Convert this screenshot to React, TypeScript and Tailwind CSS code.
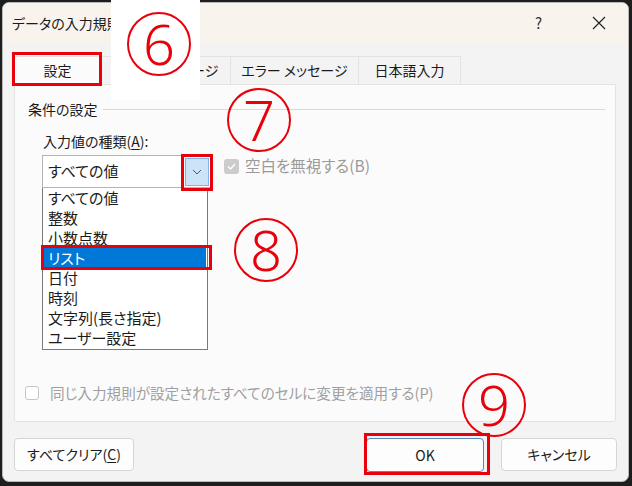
import React from 'react';

const jp = "font-['Segoe_UI','Noto_Sans_CJK_JP',sans-serif]";

// 丸数字の注記
const Badge: React.FC<{ n: string; x: number; y: number }> = ({ n, x, y }) => (
    <div
        className="absolute w-[64px] h-[64px] rounded-full border-[2.5px] border-[#e8000b] flex items-center justify-center text-[#e8000b] font-['Noto_Sans','DejaVu_Sans',sans-serif] font-light text-[56px] leading-none"
        style={{ left: x - 32, top: y - 32 }}
    >
        <span className="-mt-[3px]">{n}</span>
    </div>
);

// 赤枠
const RedBox: React.FC<{ x: number; y: number; w: number; h: number }> = ({ x, y, w, h }) => (
    <div className="absolute border-[3px] border-[#e8000b]" style={{ left: x, top: y, width: w, height: h }} />
);

const items = ['すべての値', '整数', '小数点数', 'リスト', '日付', '時刻', '文字列(長さ指定)', 'ユーザー設定'];

const App: React.FC = () => {
    return (
        <div className={`relative w-[632px] h-[486px] bg-[#1e1e1e] pt-[2px] pl-[2px] pr-[3px] pb-[4px] ${jp} [font-feature-settings:'palt'] text-[#1b1b1b]`}>
            <div className="h-full rounded-[7px] bg-[#f3f3f3] border border-[#b9b9b9] overflow-hidden flex flex-col">

                {/* TITLE BAR */}
                <div className="h-[40px] shrink-0 bg-[#f9f3ee] flex items-center pl-[9px] pr-[22px]">
                    <span className="text-[14px]">データの入力規則</span>
                    <span className="ml-auto text-[15px] text-[#333]">?</span>
                    <svg className="ml-[50px]" width="14" height="14" viewBox="0 0 14 14">
                        <path d="M1 1 L13 13 M13 1 L1 13" stroke="#222" strokeWidth="1.2" />
                    </svg>
                </div>

                {/* TABS */}
                <div className="mt-[13px] ml-[11px] flex h-[28px] text-[14px]">
                    <div className="w-[87px] bg-[#fbfbfb] border border-b-0 border-[#e3e3e3] rounded-t-[3px] flex items-center justify-center">設定</div>
                    <div className="w-[130px] border-t border-r border-[#e3e3e3] flex items-center justify-center">入力時メッセージ</div>
                    <div className="w-[128px] border-t border-r border-[#e3e3e3] flex items-center justify-center">エラー メッセージ</div>
                    <div className="w-[102px] border-t border-r border-[#e3e3e3] flex items-center justify-center">日本語入力</div>
                </div>

                {/* SETTINGS PANEL */}
                <div className="mx-[11px] mr-[12px] h-[338px] bg-[#fbfbfb] border border-[#e3e3e3] rounded-b-[3px] flex flex-col pl-[13px] pr-[10px] text-[14px]">
                    <div className="mt-[14px] h-[20px] flex items-center">
                        <span>条件の設定</span>
                        <div className="flex-1 ml-[5px] border-t border-[#d9d9d9]" />
                    </div>

                    <div className="mt-[12px] ml-[15px] h-[20px] flex items-center">
                        入力値の種類(<span className="underline underline-offset-2">A</span>):
                    </div>

                    <div className="mt-[4px] ml-[14px] flex">
                        <div className="w-[170px]">
                            <div className="h-[33px] bg-white border border-[#b4b4b4] flex items-center pl-[5px] pr-[2px] text-[15px]">
                                <span>すべての値</span>
                                <div className="ml-auto w-[24px] h-[28px] bg-[#cce4f7] border border-[#7eb4ea] flex items-center justify-center">
                                    <svg width="10" height="6" viewBox="0 0 10 6">
                                        <path d="M1 1 L5 5 L9 1" fill="none" stroke="#4a5a6a" strokeWidth="1" />
                                    </svg>
                                </div>
                            </div>
                            <div className="w-[166px] bg-white border border-t-0 border-[#7a7a7a] px-[1px] pb-[1px] text-[15px]">
                                {items.map(it => (
                                    <div
                                        key={it}
                                        className={`h-[20px] leading-[20px] pl-[4px] ${it === 'リスト' ? 'bg-[#0078d7] text-white' : ''}`}
                                    >
                                        {it}
                                    </div>
                                ))}
                            </div>
                        </div>

                        <div className="ml-[12px] -mt-[2px] h-[26px] flex items-center text-[#9a9a9a] text-[15.5px]">
                            <div className="w-[15px] h-[15px] rounded-[3px] bg-[#cccccc] flex items-center justify-center">
                                <svg width="9" height="7" viewBox="0 0 9 7">
                                    <path d="M1 3.5 L3.5 6 L8 1" fill="none" stroke="#fff" strokeWidth="1.3" />
                                </svg>
                            </div>
                            <span className="ml-[6px]">空白を無視する(B)</span>
                        </div>
                    </div>

                    <div className="mt-auto mb-[17px] ml-[-3px] flex items-center text-[#a0a0a0]">
                        <div className="w-[14px] h-[14px] rounded-[3px] border border-[#c8c8c8] bg-white" />
                        <span className="ml-[11px] text-[14.6px]">同じ入力規則が設定されたすべてのセルに変更を適用する(P)</span>
                    </div>
                </div>

                {/* BUTTONS */}
                <div className="mt-[16px] ml-[11px] mr-[11px] flex text-[14px]">
                    <button className="w-[120px] h-[33px] bg-[#fdfdfd] border border-[#d5d5d5] rounded-[4px]">
                        すべてクリア(<span className="underline underline-offset-2">C</span>)
                    </button>
                    <button className="ml-auto w-[118px] h-[34px] bg-[#fdfdfd] border border-[#5a86c0] rounded-[4px]">OK</button>
                    <button className="ml-[17px] w-[116px] h-[33px] bg-[#fdfdfd] border border-[#d5d5d5] rounded-[4px]">キャンセル</button>
                </div>
            </div>

            {/* ANNOTATIONS */}
            <div className="absolute left-[111px] top-0 w-[89px] h-[100px] bg-white" />
            <Badge n="6" x={159} y={44} />
            <RedBox x={12} y={52} w={90} h={34} />
            <Badge n="7" x={259} y={120} />
            <RedBox x={181} y={154} w={32} h={37} />
            <Badge n="8" x={266} y={250} />
            <RedBox x={41} y={245} w={171} h={25} />
            <Badge n="9" x={494} y={405} />
            <RedBox x={364} y={433} w={126} h={42} />
        </div>
    );
};

export default App;
